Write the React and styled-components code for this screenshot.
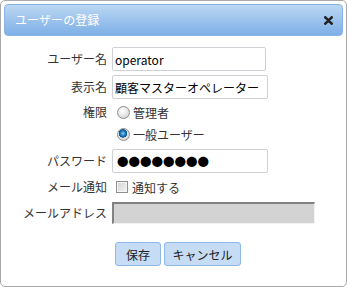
import React from "react";
import styled, { createGlobalStyle } from "styled-components";

const Global = createGlobalStyle`
  html, body { margin: 0; padding: 0; background: #fff; }
  body { font-family: "Noto Sans CJK JP", "Noto Sans", sans-serif; font-size: 12px; color: #333; }
  * { box-sizing: border-box; }
`;

const Dialog = styled.div`
  width: 347px;
  height: 287px;
  border: 1px solid #a9a9a9;
  border-radius: 5px;
  padding: 3px;
  background: #fff;
`;

const TitleBar = styled.div`
  height: 32px;
  border: 1px solid #88b3e3;
  border-radius: 4px;
  background: linear-gradient(#bbd7f2, #7eafe7);
  display: flex;
  align-items: center;
  justify-content: space-between;
  padding: 0 9px 0 10px;
`;

const Title = styled.span`
  color: #fff;
  font-size: 12px;
  line-height: 1;
  letter-spacing: 0.1px;
`;

const CloseBtn = styled.button`
  appearance: none;
  border: 0;
  background: none;
  padding: 0;
  width: 9px;
  height: 9px;
  display: flex;
  cursor: pointer;
`;

const Form = styled.div`
  margin-top: 9px;
  display: flex;
  flex-direction: column;
`;

const Row = styled.div`
  display: flex;
  align-items: ${(p) => (p.$top ? "flex-start" : "center")};
  height: ${(p) => p.$h}px;
  gap: 5px;
`;

const Label = styled.label`
  width: 103px;
  flex: none;
  text-align: right;
  color: #333;
  font-size: 12px;
  line-height: 22px;
  white-space: nowrap;
`;

const TextInput = styled.input`
  width: ${(p) => p.$w}px;
  height: 24px;
  border: 1px solid #cdd0d4;
  border-radius: 2px;
  padding: 0 ${(p) => p.$pad || 2}px;
  font-family: "Noto Sans CJK JP", "Noto Sans", sans-serif;
  font-size: ${(p) => p.$fs || 12}px;
  color: #000;
  background: #fff;
  outline: none;
`;

const DisabledInput = styled.input`
  width: 203px;
  height: 22px;
  border-style: solid;
  border-width: 2px 1px 1px 2px;
  border-color: #828282 #f2f2f2 #f2f2f2 #828282;
  background: #d3d3d3;
  padding: 0 2px;
  font-family: inherit;
  font-size: 12px;
`;

const RadioGroup = styled.div`
  display: flex;
  flex-direction: column;
  padding-left: 5px;
`;

const OptionLine = styled.label`
  display: flex;
  align-items: center;
  gap: ${(p) => p.$gap || 3}px;
  height: ${(p) => p.$h || 22}px;
  color: #333;
  font-size: 12px;
  padding-left: ${(p) => p.$pl || 0}px;
`;

const Radio = styled.input.attrs({ type: "radio" })`
  appearance: none;
  margin: 0;
  width: 13px;
  height: 13px;
  border-radius: 50%;
  border: 1px solid #8d8d8d;
  background: radial-gradient(circle at 40% 35%, #ffffff 0%, #e4e4e4 55%, #c9c9c9 100%);
  position: relative;
  &:checked {
    background:
      radial-gradient(circle at 45% 40%, #8fd0f5 0px, #2a8bd0 2px, #0b4f8c 4px, transparent 4.5px),
      radial-gradient(circle at 40% 35%, #ffffff 0%, #e4e4e4 55%, #c9c9c9 100%);
  }
`;

const Checkbox = styled.input.attrs({ type: "checkbox" })`
  appearance: none;
  margin: 0;
  width: 12px;
  height: 12px;
  border: 1px solid #8f8f8f;
  background: linear-gradient(135deg, #d2d2d2, #f4f4f4);
  box-shadow: inset 0 0 0 1px #f6f6f6;
`;

const ButtonBar = styled.div`
  margin-top: 14px;
  padding-left: 111px;
  display: flex;
  gap: 3px;
`;

const Button = styled.button`
  width: ${(p) => p.$w}px;
  height: 24px;
  border: 1px solid #8db8e8;
  border-radius: 3px;
  background: #c5dcf4;
  color: #222;
  font-family: "Noto Sans CJK JP", "Noto Sans", sans-serif;
  font-size: 12px;
  padding: 0;
  cursor: pointer;
`;

export default function App() {
  return (
    <>
      <Global />
      <Dialog>
        <TitleBar>
          <Title>ユーザーの登録</Title>
          <CloseBtn aria-label="close">
            <svg width="9" height="9" viewBox="0 0 9 9">
              <path d="M1.3 1.3 L7.7 7.7 M7.7 1.3 L1.3 7.7" stroke="#222" strokeWidth="2.6" strokeLinecap="round" />
            </svg>
          </CloseBtn>
        </TitleBar>
        <Form>
          <Row $h={28}>
            <Label>ユーザー名</Label>
            <TextInput $w={154} defaultValue="operator" />
          </Row>
          <Row $h={28}>
            <Label>表示名</Label>
            <TextInput $w={156} defaultValue="顧客マスターオペレーター" />
          </Row>
          <Row $h={44} $top>
            <Label>権限</Label>
            <RadioGroup>
              <OptionLine>
                <Radio name="role" />
                管理者
              </OptionLine>
              <OptionLine>
                <Radio name="role" defaultChecked />
                一般ユーザー
              </OptionLine>
            </RadioGroup>
          </Row>
          <Row $h={32}>
            <Label>パスワード</Label>
            <TextInput $w={156} $pad={4} $fs={11.5} readOnly value="●●●●●●●●" />
          </Row>
          <Row $h={20}>
            <Label>メール通知</Label>
            <OptionLine $gap={4} $pl={4} $h={20}>
              <Checkbox />
              通知する
            </OptionLine>
          </Row>
          <Row $h={31}>
            <Label>メールアドレス</Label>
            <DisabledInput disabled />
          </Row>
        </Form>
        <ButtonBar>
          <Button $w={46}>保存</Button>
          <Button $w={77}>キャンセル</Button>
        </ButtonBar>
      </Dialog>
    </>
  );
}
